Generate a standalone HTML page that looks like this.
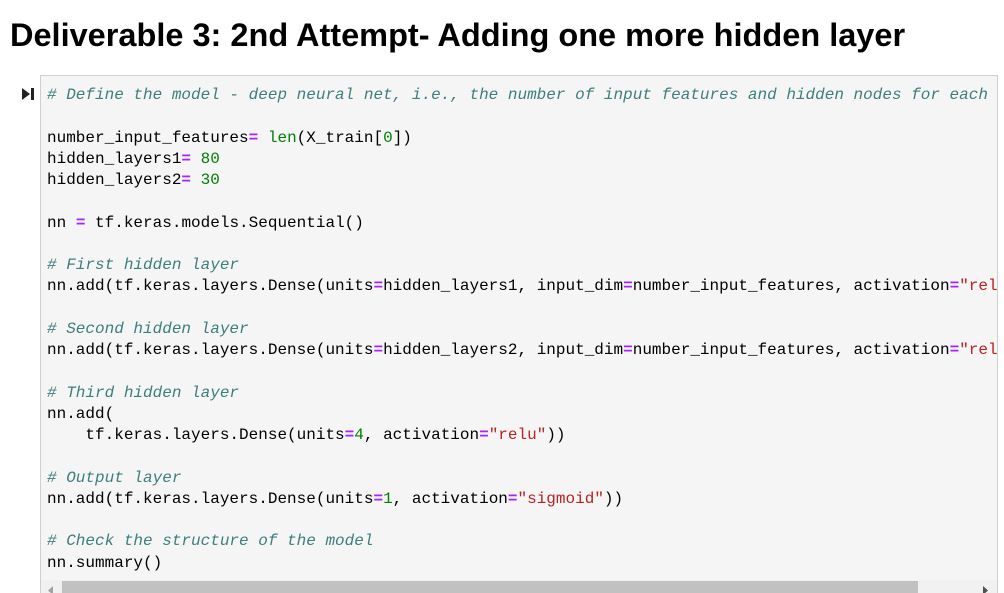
<!DOCTYPE html>
<html><head><meta charset="utf-8"><style>
html,body{margin:0;padding:0;background:#fff;width:1004px;height:593px;overflow:hidden;position:relative}
h1{position:absolute;left:10px;top:14px;margin:0;font:bold 32.5px/42px "Liberation Sans",Arial,sans-serif;color:#000;white-space:nowrap}
.run{position:absolute;left:21px;top:87px;width:14px;height:14px}
.cell{position:absolute;left:40px;top:75px;width:956px;height:530px;background:#f5f5f5;border:1px solid #cfcfcf;overflow:hidden}
pre{margin:0;position:absolute;left:6px;top:9px;font:16px/21.25px "Liberation Mono","DejaVu Sans Mono",monospace;color:#000;white-space:pre}
.c{color:#3d7e7e;font-style:italic}
.o{color:#aa22ff;font-weight:bold}
.n{color:#008000}
.s{color:#ba2121}
.b{color:#008000}
.sb{position:absolute;left:0;top:504px;width:956px;height:20px;background:#f1f1f1}
.th{position:absolute;left:21px;top:1px;width:856px;height:20px;background:#c1c1c1}
</style></head><body>
<h1>Deliverable 3: 2nd Attempt- Adding one more hidden layer</h1>
<svg class="run" viewBox="0 0 14 14"><polygon points="1,1 9,7 1,13" fill="#222"/><rect x="10" y="1" width="3" height="12" fill="#222"/></svg>
<div class="cell">
<pre><span class="c"># Define the model - deep neural net, i.e., the number of input features and hidden nodes for each layer.</span>

number_input_features<span class="o">=</span> <span class="b">len</span>(X_train[<span class="n">0</span>])
hidden_layers1<span class="o">=</span> <span class="n">80</span>
hidden_layers2<span class="o">=</span> <span class="n">30</span>

nn <span class="o">=</span> tf.keras.models.Sequential()

<span class="c"># First hidden layer</span>
nn.add(tf.keras.layers.Dense(units<span class="o">=</span>hidden_layers1, input_dim<span class="o">=</span>number_input_features, activation<span class="o">=</span><span class="s">"relu"</span>))

<span class="c"># Second hidden layer</span>
nn.add(tf.keras.layers.Dense(units<span class="o">=</span>hidden_layers2, input_dim<span class="o">=</span>number_input_features, activation<span class="o">=</span><span class="s">"relu"</span>))

<span class="c"># Third hidden layer</span>
nn.add(
    tf.keras.layers.Dense(units<span class="o">=</span><span class="n">4</span>, activation<span class="o">=</span><span class="s">"relu"</span>))

<span class="c"># Output layer</span>
nn.add(tf.keras.layers.Dense(units<span class="o">=</span><span class="n">1</span>, activation<span class="o">=</span><span class="s">"sigmoid"</span>))

<span class="c"># Check the structure of the model</span>
nn.summary()</pre>
<div class="sb"><svg style="position:absolute;left:7px;top:6px" width="6" height="9"><polygon points="5,0 0,4.5 5,9" fill="#a3a3a3"/></svg><div class="th"></div><svg style="position:absolute;left:942px;top:6px" width="6" height="9"><polygon points="0,0 5,4.5 0,9" fill="#505050"/></svg></div>
</div>
</body></html>
